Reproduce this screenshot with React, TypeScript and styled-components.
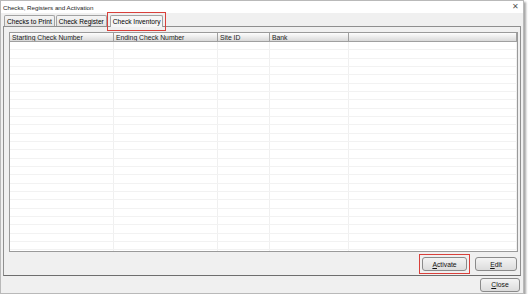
import React from 'react';
import styled, { createGlobalStyle, css } from 'styled-components';

const GlobalStyle = createGlobalStyle`
  html, body {
    margin: 0;
    padding: 0;
    background: #ffffff;
  }
  body {
    font-family: "Liberation Sans", Arial, sans-serif;
    font-size: 7px;
    color: #000;
  }
`;

// red annotation frame drawn over a control
const highlight = css`
  position: relative;
  &::after {
    content: '';
    position: absolute;
    inset: -4px;
    border: 1.5px solid #d9403b;
    pointer-events: none;
  }
`;

const Window = styled.div`
  width: 524px;
  height: 294px;
  display: flex;
  flex-direction: column;
  background: #f0f0f0;
  border: 1px solid #b9b9b9;
  box-sizing: border-box;
  box-shadow: 2px 2px 2px rgba(0, 0, 0, 0.35);
`;

const TitleBar = styled.div`
  height: 12px;
  flex: none;
  background: #ffffff;
  display: flex;
  align-items: center;
  justify-content: space-between;
  padding: 0 4px 0 2px;
`;

const Title = styled.span`
  font-size: 6.2px;
  color: #222;
`;

const CloseX = styled.span`
  font-size: 8px;
  color: #555;
  line-height: 1;
`;

const Body = styled.div`
  flex: 1;
  min-height: 0;
  display: flex;
  flex-direction: column;
  padding: 0 2px;
`;

const TabStrip = styled.div`
  display: flex;
  align-items: flex-end;
  height: 13px;
  flex: none;
  padding-left: 1px;
  gap: 1px;
`;

const Tab = styled.div<{ $active?: boolean; $marked?: boolean }>`
  height: ${(p) => (p.$active ? 12 : 11)}px;
  box-sizing: border-box;
  padding: 0 2px;
  display: flex;
  align-items: center;
  font-size: 6.6px;
  border: 1px solid #a3a3a3;
  border-bottom: none;
  border-radius: 2px 2px 0 0;
  background: ${(p) => (p.$active ? '#f6f6f6' : 'linear-gradient(#f5f5f5, #e3e3e3)')};
  margin-bottom: ${(p) => (p.$active ? -1 : 0)}px;
  margin-left: ${(p) => (p.$active ? 2 : 0)}px;
  position: relative;
  z-index: ${(p) => (p.$active ? 1 : 0)};
  ${(p) => p.$marked && highlight}
`;

const TabPanel = styled.div`
  flex: 1;
  min-height: 0;
  display: flex;
  flex-direction: column;
  border: 1px solid #8f8f8f;
  border-bottom-color: #6e6e6e;
  padding: 5px 2px 4px 5px;
  gap: 5px;
`;

const Grid = styled.div`
  flex: 1;
  min-height: 0;
  border: 1px solid #9a9a9a;
  background: #ffffff;
  overflow: hidden;
  display: flex;
  flex-direction: column;
`;

const cols = '104px 104px 52px 79px 1fr';

const HeaderRow = styled.div`
  display: grid;
  grid-template-columns: ${cols};
  height: 9px;
  flex: none;
`;

const HeaderCell = styled.div`
  background: linear-gradient(#fdfdfd, #d9d9d9);
  border-right: 1px solid #a0a0a0;
  border-bottom: 1px solid #a0a0a0;
  padding-left: 2px;
  display: flex;
  align-items: center;
  white-space: nowrap;
  overflow: hidden;
  font-size: 6.8px;
  color: #222;
`;

const Row = styled.div`
  display: grid;
  grid-template-columns: ${cols};
  height: 8.33px;
  flex: none;
  box-sizing: border-box;
  border-bottom: 1px solid #f2f2f2;
`;

const Cell = styled.div`
  border-right: 1px solid #f0f0f0;
`;

const ButtonRow = styled.div`
  display: flex;
  flex: none;
  justify-content: flex-end;
  gap: 8px;
  padding-right: 1px;
`;

const Button = styled.button<{ $width: number; $marked?: boolean }>`
  width: ${(p) => p.$width}px;
  height: 14px;
  padding: 0;
  font-family: inherit;
  font-size: 6.8px;
  color: #111;
  border: 1px solid #8a8a8a;
  border-radius: 3px;
  background: linear-gradient(#f4f4f4, #dcdcdc);
  ${(p) => p.$marked && highlight}

  u {
    text-decoration: underline;
  }
`;

const Footer = styled.div`
  height: 17px;
  flex: none;
  display: flex;
  align-items: center;
  justify-content: flex-end;
  padding-right: 1px;
`;

const headers = ['Starting Check Number', 'Ending Check Number', 'Site ID', 'Bank', ''];

const App: React.FC = () => {
  const rows = Array.from({ length: 26 });
  return (
    <>
      <GlobalStyle />
      <Window>
        <TitleBar>
          <Title>Checks, Registers and Activation</Title>
          <CloseX>✕</CloseX>
        </TitleBar>
        <Body>
          <TabStrip>
            <Tab>Checks to Print</Tab>
            <Tab>Check Register</Tab>
            <Tab $active $marked>Check Inventory</Tab>
          </TabStrip>
          <TabPanel>
            <Grid>
              <HeaderRow>
                {headers.map((h, i) => (
                  <HeaderCell key={i}>{h}</HeaderCell>
                ))}
              </HeaderRow>
              {rows.map((_, r) => (
                <Row key={r}>
                  {headers.map((_, c) => (
                    <Cell key={c} />
                  ))}
                </Row>
              ))}
            </Grid>
            <ButtonRow>
              <Button $width={45} $marked>
                <u>A</u>ctivate
              </Button>
              <Button $width={42}>
                <u>E</u>dit
              </Button>
            </ButtonRow>
          </TabPanel>
          <Footer>
            <Button $width={40}>
              <u>C</u>lose
            </Button>
          </Footer>
        </Body>
      </Window>
    </>
  );
};

export default App;
